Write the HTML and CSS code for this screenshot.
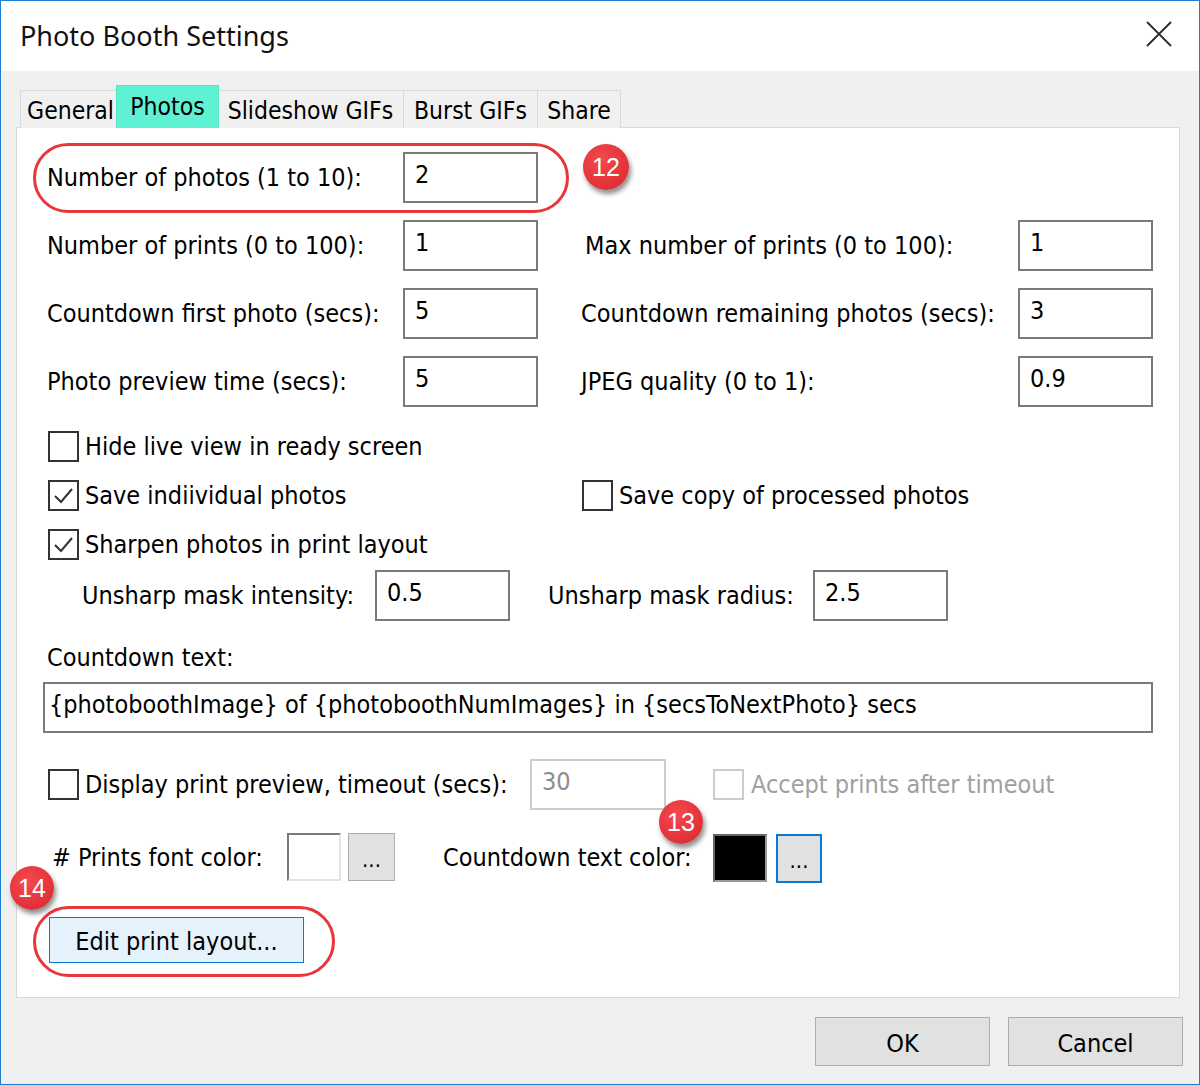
FILE: index.html
```html
<!DOCTYPE html>
<html>
<head>
<meta charset="utf-8">
<title>Photo Booth Settings</title>
<link rel="stylesheet" href="styles.css">
</head>
<body>
<div class="window">
  <div class="titlebar">
    <span class="title">Photo Booth Settings</span>
    <svg class="close" width="26" height="26" viewBox="0 0 26 26"><path d="M1 1 L25 25 M25 1 L1 25" stroke="#2b2b2b" stroke-width="1.8" fill="none"/></svg>
  </div>
  <div class="client">
    <div class="tabs">
      <div class="tab t-general">General</div>
      <div class="tab t-photos active">Photos</div>
      <div class="tab t-slide">Slideshow GIFs</div>
      <div class="tab t-burst">Burst GIFs</div>
      <div class="tab t-share">Share</div>
    </div>
    <div class="panel">
      <div class="row">
        <div class="group">
          <span class="label lw1">Number of photos (1 to 10):</span>
          <div class="edit">2</div>
        </div>
      </div>
      <div class="row gap">
        <div class="group">
          <span class="label lw1">Number of prints (0 to 100):</span>
          <div class="edit">1</div>
        </div>
        <div class="group right">
          <span class="label lw2 ind">Max number of prints (0 to 100):</span>
          <div class="edit">1</div>
        </div>
      </div>
      <div class="row gap">
        <div class="group">
          <span class="label lw1">Countdown first photo (secs):</span>
          <div class="edit">5</div>
        </div>
        <div class="group right">
          <span class="label lw2">Countdown remaining photos (secs):</span>
          <div class="edit">3</div>
        </div>
      </div>
      <div class="row gap">
        <div class="group">
          <span class="label lw1">Photo preview time (secs):</span>
          <div class="edit">5</div>
        </div>
        <div class="group right">
          <span class="label lw2">JPEG quality (0 to 1):</span>
          <div class="edit">0.9</div>
        </div>
      </div>

      <div class="checkrow first">
        <label class="check"><span class="box"></span><span>Hide live view in ready screen</span></label>
      </div>
      <div class="checkrow">
        <label class="check cw"><span class="box"><svg viewBox="0 0 27 27" width="27" height="27"><path d="M5 14 L11 20 L22 7" stroke="#333" stroke-width="2" fill="none"/></svg></span><span>Save indiividual photos</span></label>
        <label class="check"><span class="box"></span><span>Save copy of processed photos</span></label>
      </div>
      <div class="checkrow">
        <label class="check"><span class="box"><svg viewBox="0 0 27 27" width="27" height="27"><path d="M5 14 L11 20 L22 7" stroke="#333" stroke-width="2" fill="none"/></svg></span><span>Sharpen photos in print layout</span></label>
      </div>

      <div class="row unsharp">
        <span class="label lw3">Unsharp mask intensity:</span>
        <div class="edit">0.5</div>
        <span class="label lw4">Unsharp mask radius:</span>
        <div class="edit">2.5</div>
      </div>

      <div class="cd-label">Countdown text:</div>
      <div class="edit wide">{photoboothImage} of {photoboothNumImages} in {secsToNextPhoto} secs</div>

      <div class="row preview">
        <label class="check pw"><span class="box"></span><span>Display print preview, timeout (secs):</span></label>
        <div class="edit disabled">30</div>
        <label class="check disabled-check"><span class="box"></span><span>Accept prints after timeout</span></label>
      </div>

      <div class="row colors">
        <span class="label lw5">#&nbsp;Prints font color:</span>
        <div class="swatch white"></div>
        <div class="dots">...</div>
        <span class="label lw6">Countdown text color:</span>
        <div class="swatch black"></div>
        <div class="dots focused">...</div>
      </div>

      <div class="editlayout">Edit print layout...</div>

      <div class="oval oval1"></div>
      <div class="oval oval2"></div>
      <div class="badge b12">12</div>
      <div class="badge b13">13</div>
      <div class="badge b14">14</div>
    </div>
    <div class="footer">
      <div class="btn">OK</div>
      <div class="btn">Cancel</div>
    </div>
  </div>
</div>
</body>
</html>
```

FILE: styles.css
```css
* { box-sizing: border-box; }
html, body { margin: 0; padding: 0; background: #fff; }
body { font-family: "DejaVu Sans Condensed", "DejaVu Sans", Tahoma, sans-serif; font-size: 25px; color: #000; }

.window {
  width: 1200px; height: 1085px;
  border: 1px solid #1b7fd4;
  display: flex; flex-direction: column;
  background: #f0f0f0;
  overflow: hidden;
}
.titlebar {
  height: 70px; background: #fff;
  display: flex; align-items: center; justify-content: space-between;
  padding: 0 27px 0 19px;
  flex: none;
}
.title { font-family: "Noto Sans", "Open Sans", sans-serif; font-size: 27px; color: #111; padding-bottom: 1px; }
.close { display: block; margin-top: -4px; }

.client { flex: 1; padding: 15px 16px 0 15px; position: relative; }

.tabs { display: flex; align-items: flex-end; height: 42px; padding-left: 4px; margin-bottom: -1px; position: relative; z-index: 2; }
.tab {
  height: 38px; border: 1px solid #d9d9d9; border-bottom: none; margin-right: -1px;
  background: #f0f0f0; display: flex; align-items: center; justify-content: center;
  padding-top: 2px; white-space: nowrap; font-size: 24.5px;
}
.t-general { width: 99px; padding-left: 2px; }
.t-photos { width: 103px; }
.t-slide { width: 187px; }
.t-burst { width: 135px; }
.t-share { width: 84px; }
.tab.active { height: 43px; background: #5ff1d4; border-color: #57e3c5; margin-left: -2px; margin-right: -2px; position: relative; z-index: 3; padding-top: 0; padding-bottom: 1px; }

.panel {
  position: relative;
  width: 1164px; height: 871px;
  background: #fff; border: 1px solid #d9d9d9;
  padding: 24px 26px 0 30px;
}
.row { display: flex; align-items: center; height: 51px; }
.row.gap { margin-top: 17px; }
.group { display: flex; align-items: center; }
.group.right { margin-left: 43px; }
.label { white-space: nowrap; }
.lw1 { width: 356px; }
.lw2 { width: 437px; }
.ind { padding-left: 4px; }
.edit {
  width: 135px; height: 51px; border: 2px solid #7a7a7a; background: #fff;
  padding: 6px 0 0 10px; line-height: 30px; white-space: nowrap; flex: none;
}

.checkrow { display: flex; height: 31px; margin-top: 18px; }
.checkrow.first { margin-top: 24px; }
.check { display: flex; align-items: center; white-space: nowrap; }
.cw { width: 534px; }
.box {
  width: 31px; height: 31px; border: 2px solid #333; background: #fff;
  margin-left: 1px; margin-right: 6px; flex: none;
  display: flex; align-items: center; justify-content: center;
}
.box svg { display: block; }

.unsharp { margin-top: 10px; padding-left: 35px; }
.lw3 { width: 293px; }
.lw4 { width: 265px; margin-left: 38px; }

.cd-label { margin-top: 22px; height: 30px; line-height: 30px; }
.edit.wide { width: 1110px; margin-top: 9px; margin-left: -4px; padding-left: 4px; }

.preview { margin-top: 26px; }
.pw { width: 483px; }
.edit.disabled { border-color: #cccccc; color: #8d8d8d; width: 136px; }
.disabled-check { margin-left: 46px; color: #a0a0a0; }
.disabled-check .box { border-color: #cccccc; margin-right: 7px; }

.colors { margin-top: 21px; height: 52px; }
.lw5 { width: 240px; padding-left: 5px; }
.lw6 { width: 270px; margin-left: 48px; }
.swatch { width: 54px; height: 48px; flex: none; }
.swatch.white { background: #fff; border: 2px solid; border-color: #7a7a7a #e3e3e3 #e3e3e3 #7a7a7a; }
.swatch.black { background: #000; border: 2px solid; border-color: #666 #9a9a9a #9a9a9a #666; margin-top: 2px; }
.dots {
  width: 47px; height: 48px; margin-left: 7px; flex: none;
  background: #e1e1e1; border: 1px solid #adadad;
  display: flex; align-items: flex-end; justify-content: center; padding-bottom: 10px;
  font-size: 22px; line-height: 20px;
}
.dots.focused { border: 2px solid #0a78d7; margin-left: 9px; width: 46px; height: 49px; margin-top: 3px; }

.editlayout {
  margin-top: 34px; margin-left: 2px;
  width: 255px; height: 46px; background: #e5f1fb; border: 1px solid #0a78d7;
  display: flex; align-items: center; justify-content: center; padding-top: 3px;
}

.oval { position: absolute; border: 3px solid #e8363c; border-radius: 40px; }
.oval1 { left: 16px; top: 15px; width: 536px; height: 70px; }
.oval2 { left: 16px; top: 778px; width: 302px; height: 71px; }
.badge {
  position: absolute; width: 46px; height: 46px; border-radius: 50%;
  background: radial-gradient(circle at 40% 35%, #f44a4f 0%, #e3343a 60%, #cf2a30 100%);
  color: #fff; font-family: "Liberation Sans", Arial, sans-serif; font-size: 25px;
  display: flex; align-items: center; justify-content: center;
  box-shadow: 2px 4px 5px rgba(0,0,0,0.45);
}
.b12 { left: 566px; top: 16px; }
.b13 { left: 642px; top: 672px; width: 44px; height: 44px; }
.b14 { left: -7px; top: 738px; width: 44px; height: 44px; }

.footer { display: flex; justify-content: flex-end; gap: 18px; margin-top: 19px; }
.btn {
  width: 175px; height: 49px; background: #e1e1e1; border: 1px solid #adadad;
  display: flex; align-items: center; justify-content: center; padding-top: 3px;
}
```
